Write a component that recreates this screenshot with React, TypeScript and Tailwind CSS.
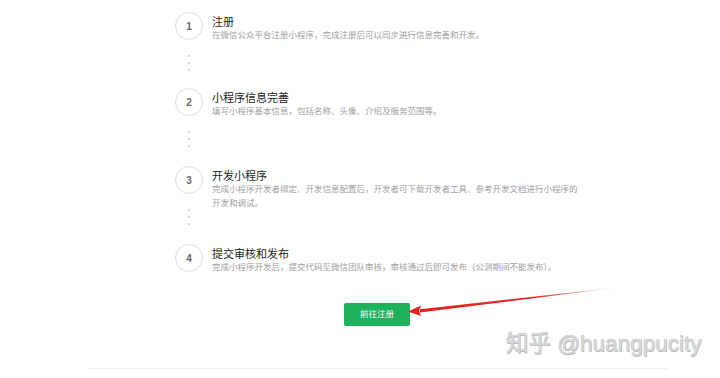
import React from "react";

const steps = [
  { n: "1", title: "注册", desc: ["在微信公众平台注册小程序，完成注册后可以同步进行信息完善和开发。"], h: 76, dots: true },
  { n: "2", title: "小程序信息完善", desc: ["填写小程序基本信息，包括名称、头像、介绍及服务范围等。"], h: 78, dots: true },
  { n: "3", title: "开发小程序", desc: ["完成小程序开发者绑定、开发信息配置后，开发者可下载开发者工具、参考开发文档进行小程序的", "开发和调试。"], h: 78, dots: true },
  { n: "4", title: "提交审核和发布", desc: ["完成小程序开发后，提交代码至微信团队审核，审核通过后即可发布（公测期间不能发布）。"], h: 40, dots: false },
];

export default function App() {
  return (
    <div
      className="relative w-[720px] h-[378px] bg-white overflow-hidden"
      style={{ fontFamily: '"Liberation Sans", "Noto Sans CJK SC", sans-serif' }}
    >
      <div className="pl-[175px] pt-[12px] flex flex-col">
        {steps.map((s) => (
          <div key={s.n} className="flex flex-row items-start" style={{ height: s.h }}>
            <div className="w-[28px] flex flex-col items-center shrink-0">
              <div className="w-[28px] h-[28px] rounded-full border border-[#dcdcdc] flex items-center justify-center text-[10px] font-bold text-[#666]">
                {s.n}
              </div>
              {s.dots && (
                <div className="mt-[15px] flex flex-col items-center gap-[5px]">
                  <div className="w-[2px] h-[2px] rounded-full bg-[#c8c8c8]" />
                  <div className="w-[2px] h-[2px] rounded-full bg-[#c8c8c8]" />
                  <div className="w-[2px] h-[2px] rounded-full bg-[#c8c8c8]" />
                </div>
              )}
            </div>
            <div className="ml-[9px] pt-[3px] flex flex-col">
              <div className="text-[11px] leading-[14px] text-[#222] font-normal">{s.title}</div>
              <div className="text-[8.5px] leading-[13.5px] text-[#a0a0a0] whitespace-nowrap">
                {s.desc.map((d, i) => (
                  <div key={i}>{d}</div>
                ))}
              </div>
            </div>
          </div>
        ))}
      </div>

      <div className="absolute left-[344px] top-[303px] w-[66px] h-[23px] rounded-[2px] bg-[#1db25b] flex items-center justify-center text-[8.5px] text-white">
        前往注册
      </div>

      <svg className="absolute left-0 top-0" width="720" height="378" viewBox="0 0 720 378">
        <defs>
          <linearGradient id="ag" x1="410" y1="312" x2="622" y2="287" gradientUnits="userSpaceOnUse">
            <stop offset="0" stopColor="#e8211f" />
            <stop offset="0.6" stopColor="#e02a28" />
            <stop offset="1" stopColor="#e02a28" stopOpacity="0" />
          </linearGradient>
        </defs>
        <polygon points="420,309.2 622,287 420,312.6" fill="url(#ag)" />
        <polygon points="408,311.5 421,305.5 419,311 421,316" fill="#e8211f" />
      </svg>

      <div
        className="absolute left-[506px] top-[330px] text-[22.5px] leading-[28px] text-[#dadada] whitespace-nowrap"
        style={{ textShadow: "0 0 1px #a8a8a8, 0.5px 0.5px 0 #b8b8b8" }}
      >
        知乎 @huangpucity
      </div>

      <div className="absolute left-[88px] top-[368px] w-[579px] h-px bg-[#eeeeee]" />
    </div>
  );
}
